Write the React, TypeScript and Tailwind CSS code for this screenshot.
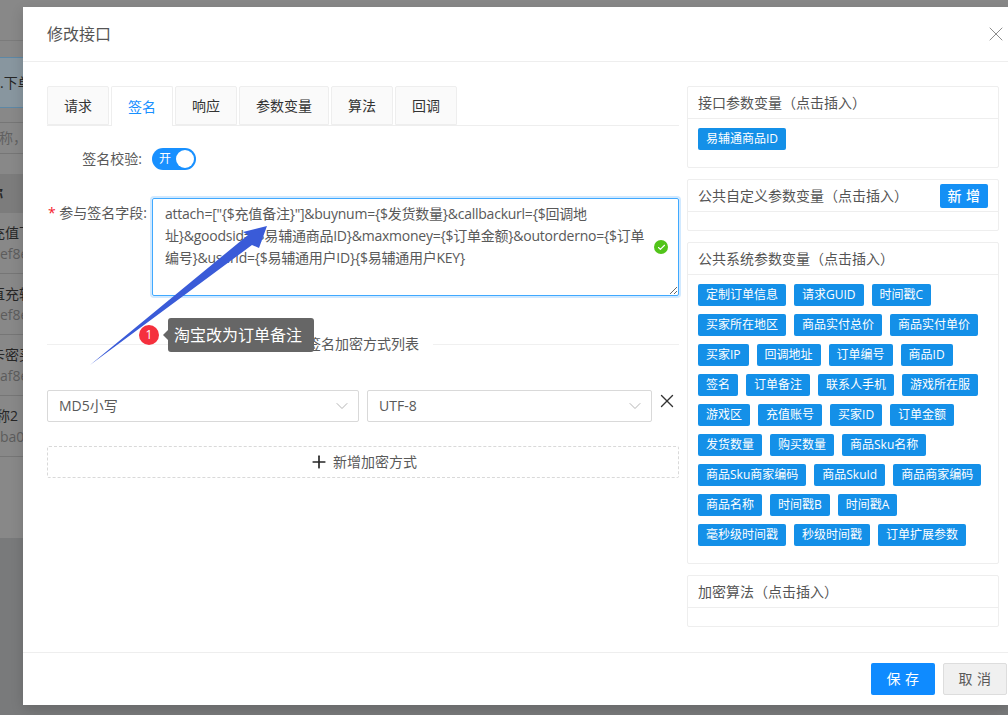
import { Check, ChevronDown, Plus, X } from "lucide-react"

const font = "font-['Open_Sans','Noto_Sans_CJK_SC',sans-serif]"

const tabs = ["请求", "签名", "响应", "参数变量", "算法", "回调"]

const systemVars = [
  "定制订单信息", "请求GUID", "时间戳C", "买家所在地区", "商品实付总价", "商品实付单价",
  "买家IP", "回调地址", "订单编号", "商品ID", "签名", "订单备注", "联系人手机", "游戏所在服",
  "游戏区", "充值账号", "买家ID", "订单金额", "发货数量", "购买数量", "商品Sku名称",
  "商品Sku商家编码", "商品SkuId", "商品商家编码", "商品名称", "时间戳B", "时间戳A",
  "毫秒级时间戳", "秒级时间戳", "订单扩展参数",
]

const signFields =
  'attach=["{$充值备注}"]&buynum={$发货数量}&callbackurl={$回调地\n址}&goodsid={$易辅通商品ID}&maxmoney={$订单金额}&outorderno={$订单\n编号}&userid={$易辅通用户ID}{$易辅通用户KEY}'

const listRows = [
  { name: "充值下单", sub: "ef8e", indent: "-ml-[9px]" },
  { name: "直充转发", sub: "ef8e", indent: "-ml-[9px]" },
  { name: "卡密买卖", sub: "af8e", indent: "-ml-[9px]" },
  { name: "称2", sub: "ba0c", indent: "-ml-[4px]" },
]

function Tag({ text }: { text: string }) {
  return (
    <span className="flex h-[22px] items-center rounded-[2px] bg-[#1490e8] px-2 text-xs whitespace-nowrap text-white">
      {text}
    </span>
  )
}

function VarCard({
  title,
  action,
  bodyClass,
  children,
}: {
  title: string
  action?: boolean
  bodyClass: string
  children?: React.ReactNode
}) {
  return (
    <div className="rounded-[2px] border border-[#eeeeee] bg-white">
      <div className="flex h-[32px] items-center justify-between border-b border-[#eeeeee] pr-[10px] pl-[10px] text-sm text-[#555555]">
        <span>{title}</span>
        {action && (
          <span className="flex h-6 w-12 items-center justify-center rounded-[2px] bg-[#1490f5] text-sm font-medium tracking-[0.5px] text-white">
            新 增
          </span>
        )}
      </div>
      <div className={bodyClass}>{children}</div>
    </div>
  )
}

function SelectBox({ value, className }: { value: string; className: string }) {
  return (
    <div
      className={`flex h-8 shrink-0 items-center justify-between rounded-[2px] border border-[#d9d9d9] pr-[6px] pl-[11px] text-sm text-[#595959] ${className}`}
    >
      <span>{value}</span>
      <ChevronDown size={20} strokeWidth={1.2} className="text-[#b5b5b5]" />
    </div>
  )
}

function BackdropPage() {
  return (
    <div className="flex h-[715px] w-full flex-col overflow-hidden bg-[#888888] text-sm whitespace-nowrap text-[#262626]">
      <div className="h-[41px] shrink-0 border-b border-[#7b7b7b]" />
      <div className="mt-4 flex h-[51px] shrink-0 items-center border-y border-[#5d88a6] bg-[#88969f]">
        .下单
      </div>
      <div className="mt-[14px] flex h-[32px] shrink-0 items-center border-y border-[#767676] text-[#606060]">
        <span className="-ml-px">称，</span>
      </div>
      <div className="mt-[20px] flex h-[39px] shrink-0 items-center bg-[#7c7c7c] font-bold">
        <span className="-ml-[11px]">称</span>
      </div>
      {listRows.map((row) => (
        <div key={row.name} className="flex h-[61px] shrink-0 flex-col justify-center gap-px border-b border-[#767676]">
          <span className={row.indent}>{row.name}</span>
          <span className="text-[#5c5c5c]">{row.sub}</span>
        </div>
      ))}
      <div className="h-[81px] shrink-0" />
      <div className="flex-1 bg-[#797a7b]" />
    </div>
  )
}

export default function App() {
  return (
    <div className={`relative h-[715px] w-[1008px] overflow-hidden ${font}`}>
      <BackdropPage />

      <div className="absolute top-[7px] left-[23px] flex h-[698px] w-[985px] flex-col bg-white shadow-[0_4px_12px_rgba(0,0,0,0.15)]">
        <div className="flex h-[55px] shrink-0 items-center justify-between border-b border-[#eeeeee] pl-6">
          <h1 className="text-base text-[#555555]">修改接口</h1>
          <X size={24} strokeWidth={1} className="text-[#8c8c8c]" />
        </div>

        <div className="flex flex-1 gap-2 pt-6 pl-6">
          <div className="w-[632px]">
            <div className="flex h-10 gap-[2px] border-b border-[#eeeeee]">
              {tabs.map((tab) =>
                tab === "签名" ? (
                  <div
                    key={tab}
                    className="-mb-px flex items-center rounded-t-[2px] border border-b-0 border-[#eeeeee] bg-white px-4 text-sm text-[#1890ff]"
                  >
                    {tab}
                  </div>
                ) : (
                  <div
                    key={tab}
                    className="flex items-center rounded-t-[2px] border border-[#eeeeee] bg-[#fafafa] px-4 text-sm text-[#333333]"
                  >
                    {tab}
                  </div>
                ),
              )}
            </div>

            <div className="mt-[22px] flex items-center text-sm text-[#595959]">
              <span className="w-[105px] pr-[10px] text-right">签名校验:</span>
              <div className="flex h-[22px] w-[44px] items-center justify-between rounded-full bg-[#1890ff] pr-[2px] pl-[7px] text-xs text-white">
                开
                <span className="h-[18px] w-[18px] rounded-full bg-white" />
              </div>
            </div>

            <div className="mt-[28px] flex items-start text-sm">
              <label className="flex w-[105px] justify-between pt-[5px] pr-[5px] pl-px whitespace-nowrap text-[#595959]">
                <span className="text-[#f5222d]">*</span>
                参与签名字段:
              </label>
              <div className="relative h-[98px] w-[527px]">
                <textarea
                  readOnly
                  value={signFields}
                  className="block h-full w-full resize overflow-hidden rounded-[2px] border border-[#40a9ff] py-[4px] pr-[30px] pl-[12px] text-sm leading-[22px] tracking-[-0.24px] whitespace-pre text-[#595959] shadow-[0_0_0_2px_rgba(24,144,255,0.2)] outline-none"
                />
                <span className="absolute top-[42px] right-[11px] flex h-[14px] w-[14px] items-center justify-center rounded-full bg-[#52c41a] text-white">
                  <Check size={9} strokeWidth={3} />
                </span>
              </div>
            </div>

            <div className="mt-[37px] flex h-[22px] items-center text-sm text-[#595959]">
              <div className="h-px flex-1 bg-[#f0f0f0]" />
              <span className="px-[14px]">签名加密方式列表</span>
              <div className="h-px flex-1 bg-[#f0f0f0]" />
            </div>

            <div className="mt-[35px] flex items-start gap-2">
              <SelectBox value="MD5小写" className="w-[312px]" />
              <SelectBox value="UTF-8" className="w-[285px]" />
              <X size={22} strokeWidth={1.5} className="-ml-[4px] shrink-0 text-[#333333]" />
            </div>

            <div className="mt-6 flex h-8 items-center justify-center gap-1 rounded-[2px] border border-dashed border-[#d9d9d9] text-sm text-[#595959]">
              <Plus size={20} strokeWidth={2} className="text-[#262626]" />
              新增加密方式
            </div>
          </div>

          <div className="flex w-[312px] flex-col gap-[11px]">
            <VarCard title="接口参数变量（点击插入）" bodyClass="h-[48px] px-[10px] pt-[9px]">
              <div className="flex">
                <Tag text="易辅通商品ID" />
              </div>
            </VarCard>
            <VarCard title="公共自定义参数变量（点击插入）" action bodyClass="h-[18px]" />
            <VarCard
              title="公共系统参数变量（点击插入）"
              bodyClass="flex h-[288px] flex-wrap content-start gap-x-2 gap-y-2 px-[10px] pt-[9px]"
            >
              {systemVars.map((name) => (
                <Tag key={name} text={name} />
              ))}
            </VarCard>
            <VarCard title="加密算法（点击插入）" bodyClass="h-[18px]" />
          </div>
        </div>

        <div className="flex h-[53px] shrink-0 items-center justify-end gap-2 border-t border-[#eeeeee] pr-px">
          <button className="h-8 w-16 rounded-[2px] bg-[#0f8bff] text-sm tracking-[0.5px] text-white">保 存</button>
          <button className="h-8 w-16 rounded-[2px] border border-[#dddddd] bg-[#f0f0f0] text-sm tracking-[0.5px] text-[#595959]">
            取 消
          </button>
        </div>
      </div>

      {/* screenshot annotation drawn on top of the dialog */}
      <svg className="pointer-events-none absolute top-0 left-0" width="1008" height="715">
        <polygon points="90,365 248,235 243,232 267,226 259,248 252,245" fill="#3a5bd8" />
      </svg>
      <div className="absolute top-[325px] left-[139px] flex h-5 w-5 items-center justify-center rounded-full bg-[#f5303d] text-xs text-white">
        1
      </div>
      <div className="absolute top-[318px] left-[168px] flex h-[34px] items-center rounded-[3px] bg-[#666666] pr-3 pl-[6px] text-base text-white">
        <span className="absolute top-[12px] -left-[5px] h-0 w-0 border-y-[5px] border-r-[5px] border-y-transparent border-r-[#666666]" />
        淘宝改为订单备注
      </div>
    </div>
  )
}
